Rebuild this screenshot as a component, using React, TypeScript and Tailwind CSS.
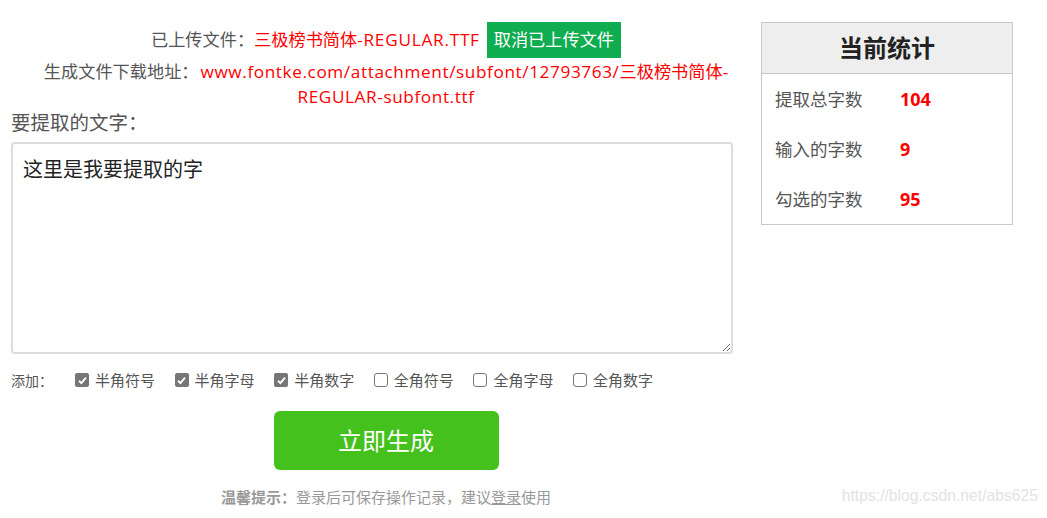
import React from "react";

const font = { fontFamily: '"Open Sans", "Noto Sans CJK SC", "Noto Sans", sans-serif' };

function Check({ checked, label }: { checked: boolean; label: string }) {
  return (
    <label className="flex items-center w-[99.6px] text-[15px] text-[#555]">
      {checked ? (
        <span className="w-[14px] h-[14px] rounded-[2px] bg-[#767676] flex items-center justify-center mr-[6px]">
          <svg viewBox="0 0 12 12" width="11" height="11">
            <path d="M2.2 6.3 L4.8 8.8 L9.8 2.8" fill="none" stroke="#fff" strokeWidth="2" />
          </svg>
        </span>
      ) : (
        <span className="w-[14px] h-[14px] rounded-[3px] border border-[#767676] bg-white mr-[6px]" />
      )}
      <span>{label}</span>
    </label>
  );
}

export default function App() {
  return (
    <div className="w-[1047px] h-[518px] bg-white relative overflow-hidden" style={font}>
      <div className="flex">
        <div className="w-[761px] pl-[11px]">
          <div className="w-[750px] flex flex-col items-center pt-[22px]">
            <div className="flex items-center text-[17.2px] text-[#555] h-[36px]">
              <span>已上传文件：</span>
              <span className="text-[#ff0000]">
                三极榜书简体<span className="tracking-[0.75px]">-REGULAR.TTF</span>
              </span>
              <span className="ml-[7px] bg-[#0fac50] text-white text-[17.2px] h-[36px] px-[7px] flex items-center">
                取消已上传文件
              </span>
            </div>
            <div className="text-[17.2px] text-[#555] leading-[25px] text-center w-[750px] mt-[1px]">
              生成文件下载地址：
              <span className="text-[#ff0000] ml-[2px]">
                <span className="tracking-[0.6px]">www.fontke.com/attachment/subfont/12793763/</span>
                三极榜书简体-<span className="tracking-[0.6px]">REGULAR-subfont.ttf</span>
              </span>
            </div>
          </div>
          <div className="text-[19.5px] text-[#555] leading-[25px] mt-[1px]">要提取的文字：</div>
          <textarea
            className="mt-[7px] w-[722px] h-[212px] border-2 border-[#ddd] rounded-[4px] px-[10px] pt-[12px] pb-[10px] text-[20px] leading-[28px] text-[#222] outline-none block resize-y"
            style={font}
            defaultValue="这里是我要提取的字"
          />
          <div className="flex items-center mt-[14px] h-[24px]">
            <span className="text-[14px] text-[#555] w-[64px]">添加：</span>
            <Check checked label="半角符号" />
            <Check checked label="半角字母" />
            <Check checked label="半角数字" />
            <Check checked={false} label="全角符号" />
            <Check checked={false} label="全角字母" />
            <Check checked={false} label="全角数字" />
          </div>
          <div className="w-[750px] flex justify-center mt-[19px]">
            <button className="w-[225px] h-[59px] rounded-[6px] bg-[#44c11c] text-white text-[24px]" style={font}>
              立即生成
            </button>
          </div>
          <div className="w-[750px] flex justify-center mt-[16px] text-[15px] text-[#999]">
            <span className="font-bold">温馨提示：</span>
            <span>登录后可保存操作记录，建议</span>
            <span className="underline">登录</span>
            <span>使用</span>
          </div>
        </div>
        <div className="mt-[22px] w-[252px] h-[203px] border border-[#c8c8c8] self-start">
          <div className="h-[51px] bg-[#eeeeee] border-b border-[#c8c8c8] flex items-center justify-center text-[24px] font-bold text-[#222]">
            当前统计
          </div>
          <div className="pl-[13px]">
            {[
              ["提取总字数", "104"],
              ["输入的字数", "9"],
              ["勾选的字数", "95"],
            ].map(([k, v]) => (
              <div key={k} className="flex items-center h-[50px] text-[17.5px]">
                <span className="w-[125px] text-[#555]">{k}</span>
                <span className="text-[#ff0000] font-bold text-[18px]">{v}</span>
              </div>
            ))}
          </div>
        </div>
      </div>
      <div
        className="absolute right-[9px] bottom-[10px] text-[15.7px] text-[#e3e3e3]"
        style={{ fontFamily: '"Liberation Sans", Arial, sans-serif' }}
      >
        https://blog.csdn.net/abs625
      </div>
    </div>
  );
}
